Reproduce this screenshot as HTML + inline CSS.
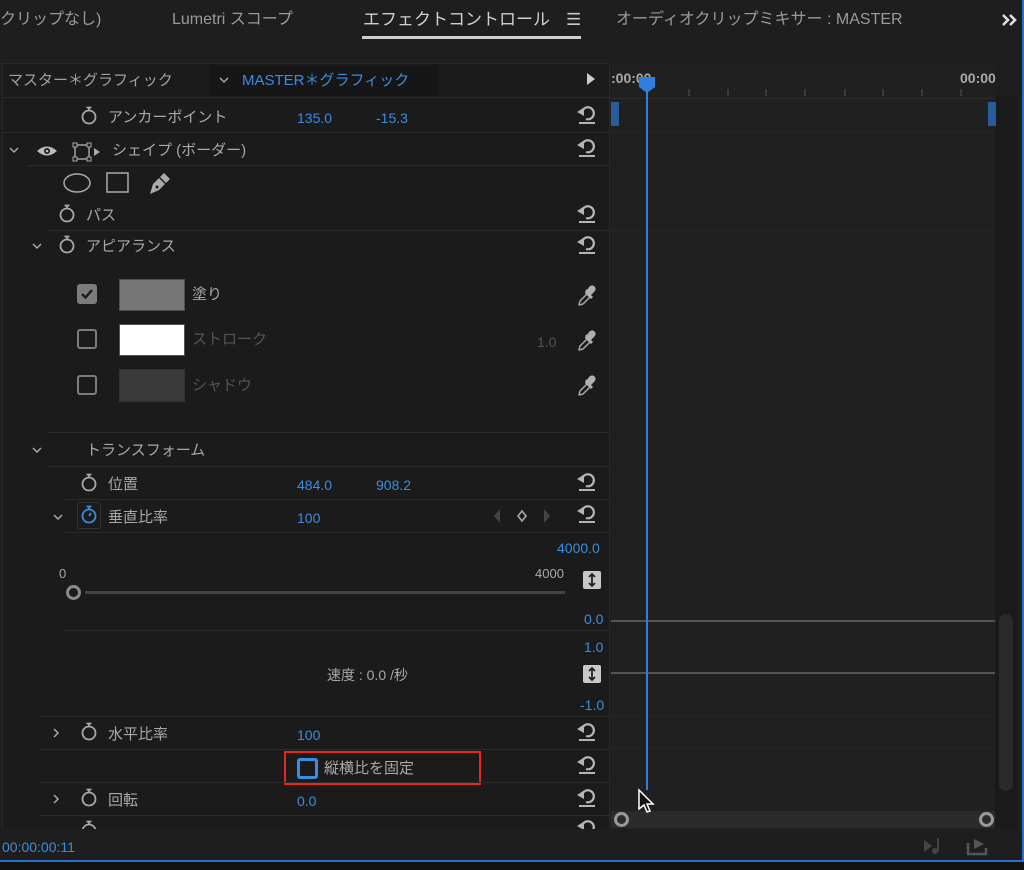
<!DOCTYPE html>
<html><head><meta charset="utf-8"><style>
*{margin:0;padding:0;box-sizing:border-box}
body{width:1024px;height:870px;background:#1e1e1e;position:relative;overflow:hidden;font-family:"Liberation Sans","Noto Sans CJK JP",sans-serif;color:#a8a8a8;font-size:15px}
.a{position:absolute;white-space:nowrap;line-height:1}
.b{color:#3b8de0;font-size:14px}
.d{color:#4f4f4f}
.hl{position:absolute;height:1px;background:#2b2b2b}
svg.i{position:absolute;overflow:visible}
</style></head><body>
<svg width="0" height="0" style="position:absolute"><defs>
<g id="sw" fill="none" stroke="#a8a8a8" stroke-width="1.8"><circle cx="9" cy="11" r="6.5"/><path d="M9 4.5V2M6.5 1.5h5"/></g>
<g id="rs"><path d="M6 8 A6 6 0 1 1 10 15" fill="none" stroke="#b5b5b5" stroke-width="2.2"/><path d="M1 8 L8 3.5 L8 12z" fill="#b5b5b5"/><path d="M3 19h16" stroke="#b5b5b5" stroke-width="2"/></g>
<g id="dp"><path d="M3 21 L4 17 L11 10 L14 13 L7 20 Z" fill="none" stroke="#a8a8a8" stroke-width="1.5" stroke-linejoin="round"/><path d="M9 9 L15 15 L17 13 L15 11 L18 8 Q21 5 18.5 2.5 Q16 0 13 3 L11 6 L10 5 Z" fill="#b0b0b0"/></g>
<g id="cd"><path d="M1 1l4 4 4-4" fill="none" stroke="#a8a8a8" stroke-width="1.5"/></g>
<g id="cr"><path d="M1 1l4 4-4 4" fill="none" stroke="#a8a8a8" stroke-width="1.5"/></g>
</defs></svg>

<!-- top tab bar -->
<div class="a" style="left:0;top:12px;font-size:16px;color:#9a9a9a">クリップなし)</div>
<div class="a" style="left:172px;top:12px;font-size:16px;color:#9a9a9a">Lumetri スコープ</div>
<div class="a" style="left:363px;top:11px;font-size:17px;color:#d0d0d0">エフェクトコントロール</div>
<div class="a" style="left:566px;top:11px;font-size:17px;color:#c8c8c8">☰</div>
<div style="position:absolute;left:362px;top:36px;width:219px;height:3px;background:#cfcfcf"></div>
<div class="a" style="left:616px;top:12px;font-size:16px;color:#9a9a9a">オーディオクリップミキサー : MASTER</div>
<svg class="i" style="left:1001px;top:13px" width="18" height="14"><path d="M2 2l5 5-5 5M9 2l5 5-5 5" fill="none" stroke="#ddd" stroke-width="2.6"/></svg>
<div style="position:absolute;right:0;top:0;width:2px;height:862px;background:#2a6fc9"></div>

<!-- left panel -->
<div style="position:absolute;left:2px;top:63px;width:608px;height:767px;background:#1b1b1b;border:1px solid #2a2a2a"></div>
<div style="position:absolute;left:210px;top:65px;width:228px;height:31px;background:#161616"></div>
<div class="a" style="left:8px;top:73px;color:#a0a0a0">マスター＊グラフィック</div>
<svg class="i" style="left:219px;top:77px" width="10" height="8"><use href="#cd"/></svg>
<div class="a" style="left:242px;top:73px;color:#3b8de0">MASTER＊グラフィック</div>
<div style="position:absolute;left:587px;top:73px;width:0;height:0;border-left:8px solid #ccc;border-top:6px solid transparent;border-bottom:6px solid transparent"></div>
<div class="hl" style="left:2px;top:97px;width:608px"></div>

<!-- timeline -->
<div style="position:absolute;left:611px;top:64px;width:384px;height:765px;background:#202020"></div>
<div style="position:absolute;left:995px;top:96px;width:22px;height:733px;background:#1a1a1a"></div>
<div style="position:absolute;left:999px;top:614px;width:14px;height:177px;background:#2a2a2a;border-radius:7px"></div>
<div class="a" style="left:611px;top:71px;font-size:14px;color:#aaa;font-weight:bold">:00:00</div>
<div class="a" style="left:960px;top:71px;font-size:14px;color:#aaa;font-weight:bold">00:00</div>
<svg class="i" style="left:611px;top:86px" width="385" height="12"><g stroke="#555" stroke-width="1"><path d="M78 3v7M117 3v7M155 3v7M194 3v7M234 3v7M272 3v7M311 3v7M350 3v7"/></g></svg>
<div class="hl" style="left:611px;top:98px;width:384px;background:#2b2b2b"></div>
<div style="position:absolute;left:611px;top:102px;width:8px;height:24px;background:#2a5c9c"></div>
<div style="position:absolute;left:988px;top:102px;width:8px;height:24px;background:#2a5c9c"></div>
<div class="hl" style="left:611px;top:132px;width:384px;background:#262626"></div>
<div class="hl" style="left:611px;top:230px;width:384px;background:#262626"></div>
<div class="hl" style="left:611px;top:620px;width:384px;height:2px;background:#555"></div>
<div class="hl" style="left:611px;top:672px;width:384px;height:2px;background:#555"></div>
<div class="hl" style="left:611px;top:715px;width:384px;background:#262626"></div>
<div class="hl" style="left:611px;top:748px;width:384px;background:#262626"></div>
<div style="position:absolute;left:646px;top:88px;width:2px;height:702px;background:#2f7fe0"></div>
<svg class="i" style="left:638px;top:76px" width="18" height="18"><path d="M1 1h16v10l-8 6-8-6z" fill="#2f7fe0"/></svg>
<div style="position:absolute;left:611px;top:811px;width:384px;height:17px;background:#2b2b2b"></div>
<div style="position:absolute;left:614px;top:812px;width:15px;height:15px;border:3px solid #999;border-radius:50%;background:#2b2b2b"></div>
<div style="position:absolute;left:979px;top:812px;width:15px;height:15px;border:3px solid #999;border-radius:50%;background:#2b2b2b"></div>
<svg class="i" style="left:637px;top:788px" width="20" height="28"><path d="M2 2v19l5-4 3 7 3-1-3-7h6z" fill="#111" stroke="#fff" stroke-width="1.5"/></svg>

<!-- rows -->
<svg class="i" style="left:80px;top:106px" width="20" height="20"><use href="#sw"/></svg>
<div class="a" style="left:108px;top:110px">アンカーポイント</div>
<div class="a b" style="left:297px;top:111px">135.0</div>
<div class="a b" style="left:376px;top:111px">-15.3</div>
<div class="hl" style="left:2px;top:132px;width:608px"></div>

<svg class="i" style="left:9px;top:147px" width="10" height="8"><use href="#cd"/></svg>
<svg class="i" style="left:36px;top:143px" width="22" height="16"><path d="M1 8Q11 -1 21 8Q11 17 1 8z" fill="#bbb"/><circle cx="11" cy="8" r="3" fill="#1b1b1b"/><circle cx="11" cy="8" r="1.3" fill="#bbb"/></svg>
<svg class="i" style="left:72px;top:142px" width="34" height="20"><rect x="3" y="3" width="14" height="14" fill="none" stroke="#aaa" stroke-width="1.4"/><g fill="#1b1b1b" stroke="#aaa" stroke-width="1"><rect x="1" y="1" width="4" height="4"/><rect x="15" y="1" width="4" height="4"/><rect x="1" y="15" width="4" height="4"/><rect x="15" y="15" width="4" height="4"/></g><path d="M22 6l6 4-6 4z" fill="#aaa"/></svg>
<div class="a" style="left:112px;top:143px">シェイプ (ボーダー)</div>
<div class="hl" style="left:28px;top:165px;width:582px"></div>
<svg class="i" style="left:62px;top:172px" width="120" height="24"><ellipse cx="15" cy="11" rx="13" ry="9" fill="none" stroke="#aaa" stroke-width="1.5"/><rect x="45" y="1" width="21" height="19" fill="none" stroke="#aaa" stroke-width="1.5"/><path d="M88 22l3-10 6-6 6 6-6 6z" fill="#aaa"/><path d="M98 5l4-4 6 6-4 4z" fill="#aaa"/><circle cx="95" cy="15" r="1.5" fill="#1b1b1b"/></svg>
<svg class="i" style="left:58px;top:204px" width="20" height="20"><use href="#sw"/></svg>
<div class="a" style="left:86px;top:208px">パス</div>
<div class="hl" style="left:47px;top:230px;width:563px"></div>
<svg class="i" style="left:32px;top:243px" width="10" height="8"><use href="#cd"/></svg>
<svg class="i" style="left:58px;top:235px" width="20" height="20"><use href="#sw"/></svg>
<div class="a" style="left:86px;top:239px">アピアランス</div>

<div style="position:absolute;left:77px;top:284px;width:20px;height:20px;background:#7c7c7c;border-radius:3px"></div>
<svg class="i" style="left:79px;top:286px" width="16" height="16"><path d="M3 8l3.5 3.5L13 4" fill="none" stroke="#1b1b1b" stroke-width="2.4"/></svg>
<div style="position:absolute;left:119px;top:279px;width:66px;height:32px;background:#767676;border:1px solid #505050"></div>
<div class="a" style="left:192px;top:287px">塗り</div>
<div style="position:absolute;left:77px;top:329px;width:20px;height:20px;border:2px solid #7c7c7c;border-radius:3px"></div>
<div style="position:absolute;left:119px;top:324px;width:66px;height:32px;background:#fff;border:1px solid #555"></div>
<div class="a d" style="left:192px;top:332px;color:#555">ストローク</div>
<div class="a" style="left:537px;top:335px;font-size:14px;color:#555">1.0</div>
<div style="position:absolute;left:77px;top:375px;width:20px;height:20px;border:2px solid #7c7c7c;border-radius:3px"></div>
<div style="position:absolute;left:119px;top:369px;width:66px;height:33px;background:#3a3a3a;border:1px solid #333"></div>
<div class="a" style="left:192px;top:378px;color:#555">シャドウ</div>
<svg class="i" style="left:576px;top:284px" width="22" height="24"><use href="#dp"/></svg>
<svg class="i" style="left:576px;top:329px" width="22" height="24"><use href="#dp"/></svg>
<svg class="i" style="left:576px;top:374px" width="22" height="24"><use href="#dp"/></svg>

<div class="hl" style="left:47px;top:432px;width:563px"></div>
<svg class="i" style="left:32px;top:447px" width="10" height="8"><use href="#cd"/></svg>
<div class="a" style="left:86px;top:443px">トランスフォーム</div>
<div class="hl" style="left:47px;top:466px;width:563px"></div>
<svg class="i" style="left:80px;top:473px" width="20" height="20"><use href="#sw"/></svg>
<div class="a" style="left:108px;top:477px">位置</div>
<div class="a b" style="left:297px;top:478px">484.0</div>
<div class="a b" style="left:376px;top:478px">908.2</div>
<div class="hl" style="left:65px;top:499px;width:545px"></div>
<svg class="i" style="left:53px;top:514px" width="10" height="8"><use href="#cd"/></svg>
<div style="position:absolute;left:77px;top:502px;width:24px;height:27px;border:1px solid #333;border-radius:3px"></div>
<svg class="i" style="left:80px;top:505px" width="20" height="20"><g fill="none" stroke="#3b8de0" stroke-width="1.8"><circle cx="9" cy="11" r="6.5"/><path d="M9 4.5V2M6.5 1.5h5M9 11l2-3"/></g></svg>
<div class="a" style="left:108px;top:510px">垂直比率</div>
<div class="a b" style="left:297px;top:511px">100</div>
<svg class="i" style="left:492px;top:508px" width="62" height="16"><path d="M8 1v14l-6-7z" fill="#444"/><path d="M30 3l4 5-4 5-4-5z" fill="none" stroke="#aaa" stroke-width="1.6"/><path d="M52 1v14l6-7z" fill="#444"/></svg>
<div class="hl" style="left:65px;top:532px;width:545px"></div>
<div class="a b" style="left:557px;top:541px">4000.0</div>
<div class="a" style="left:59px;top:567px;font-size:13px">0</div>
<div class="a" style="left:535px;top:567px;font-size:13px">4000</div>
<div style="position:absolute;left:583px;top:571px;width:18px;height:18px;background:#c8c8c8;border-radius:2px"></div>
<svg class="i" style="left:583px;top:571px" width="18" height="18"><path d="M9 3v12M6 6l3-3 3 3M6 12l3 3 3-3" fill="none" stroke="#222" stroke-width="1.8"/></svg>
<div style="position:absolute;left:85px;top:591px;width:480px;height:3px;background:#444"></div>
<div style="position:absolute;left:66px;top:585px;width:15px;height:15px;border:3px solid #8a8a8a;border-radius:50%;background:#1b1b1b"></div>
<div class="a b" style="left:584px;top:612px">0.0</div>
<div class="hl" style="left:65px;top:630px;width:545px"></div>
<div class="a b" style="left:584px;top:640px">1.0</div>
<div class="a" style="left:327px;top:668px;font-size:14px">速度 : 0.0 /秒</div>
<div style="position:absolute;left:583px;top:665px;width:18px;height:18px;background:#c8c8c8;border-radius:2px"></div>
<svg class="i" style="left:583px;top:665px" width="18" height="18"><path d="M9 3v12M6 6l3-3 3 3M6 12l3 3 3-3" fill="none" stroke="#222" stroke-width="1.8"/></svg>
<div class="a b" style="left:580px;top:698px">-1.0</div>
<div class="hl" style="left:40px;top:716px;width:570px"></div>
<svg class="i" style="left:53px;top:728px" width="8" height="10"><use href="#cr"/></svg>
<svg class="i" style="left:80px;top:722px" width="20" height="20"><use href="#sw"/></svg>
<div class="a" style="left:108px;top:727px">水平比率</div>
<div class="a b" style="left:297px;top:728px">100</div>
<div class="hl" style="left:40px;top:749px;width:570px"></div>
<div style="position:absolute;left:284px;top:751px;width:197px;height:34px;border:2px solid #e8261b"></div>
<div style="position:absolute;left:297px;top:758px;width:21px;height:21px;border:3px solid #3b8de0;border-radius:3px"></div>
<div class="a" style="left:324px;top:761px">縦横比を固定</div>
<div class="hl" style="left:40px;top:782px;width:570px"></div>
<svg class="i" style="left:53px;top:794px" width="8" height="10"><use href="#cr"/></svg>
<svg class="i" style="left:80px;top:788px" width="20" height="20"><use href="#sw"/></svg>
<div class="a" style="left:108px;top:793px">回転</div>
<div class="a b" style="left:297px;top:794px">0.0</div>
<div class="hl" style="left:40px;top:815px;width:570px"></div>
<svg class="i" style="left:80px;top:820px" width="20" height="10"><use href="#sw"/></svg>

<!-- reset icons -->
<svg class="i" style="left:576px;top:104px" width="22" height="22"><use href="#rs"/></svg>
<svg class="i" style="left:576px;top:137px" width="22" height="22"><use href="#rs"/></svg>
<svg class="i" style="left:576px;top:203px" width="22" height="22"><use href="#rs"/></svg>
<svg class="i" style="left:576px;top:234px" width="22" height="22"><use href="#rs"/></svg>
<svg class="i" style="left:576px;top:471px" width="22" height="22"><use href="#rs"/></svg>
<svg class="i" style="left:576px;top:503px" width="22" height="22"><use href="#rs"/></svg>
<svg class="i" style="left:576px;top:721px" width="22" height="22"><use href="#rs"/></svg>
<svg class="i" style="left:576px;top:754px" width="22" height="22"><use href="#rs"/></svg>
<svg class="i" style="left:576px;top:787px" width="22" height="22"><use href="#rs"/></svg>
<svg class="i" style="left:576px;top:818px" width="22" height="12" ><use href="#rs"/></svg>
<div style="position:absolute;left:0;top:829px;width:1022px;height:33px;background:#1e1e1e"></div>

<!-- bottom bar -->
<div class="a" style="left:2px;top:840px;font-size:14px;color:#3b8de0">00:00:00:11</div>
<svg class="i" style="left:922px;top:835px" width="70" height="22"><path d="M2 5v12l8-6z" fill="#444"/><path d="M16 3v13" stroke="#444" stroke-width="2"/><circle cx="13" cy="16" r="3" fill="#444"/><path d="M46 8v11h18v-6" fill="none" stroke="#555" stroke-width="2.5"/><path d="M52 4l10 5-10 5z" fill="#555"/></svg>
<div style="position:absolute;left:0;top:860px;width:1024px;height:2px;background:#2a6fc9"></div>
<div style="position:absolute;left:0;top:862px;width:1024px;height:8px;background:#121212"></div>
</body></html>
